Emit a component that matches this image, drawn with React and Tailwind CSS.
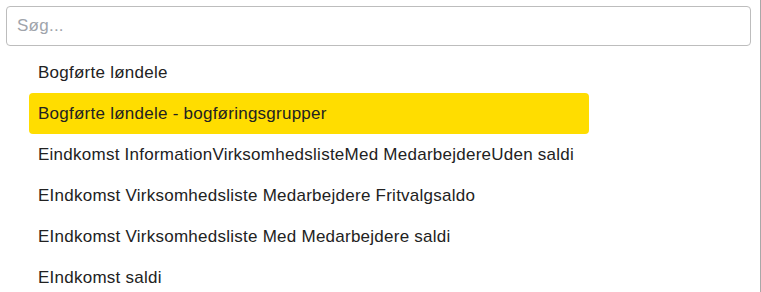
import React from "react";

const items = [
  "Bogførte løndele",
  "Bogførte løndele - bogføringsgrupper",
  "Eindkomst InformationVirksomhedslisteMed MedarbejdereUden saldi",
  "EIndkomst Virksomhedsliste Medarbejdere Fritvalgsaldo",
  "EIndkomst Virksomhedsliste Med Medarbejdere saldi",
  "EIndkomst saldi",
];

export default function App() {
  return (
    <div
      className="w-[761px] h-[292px] overflow-hidden bg-white border-r border-[#a8a8a8] flex flex-col"
      style={{ fontFamily: '"Liberation Sans", Arial, sans-serif' }}
    >
      <div className="pt-[6px] pl-[6px] pr-[9px]">
        <input
          placeholder="Søg..."
          className="w-full h-[40px] rounded-[4px] border border-[#bdbdbd] px-[10px] text-[17px] tracking-[0.25px] text-[#222] placeholder:text-[#a0a4ab] outline-none"
        />
      </div>
      <ul className="mt-[6px] pl-[29px] w-[589px] flex flex-col">
        {items.map((t, i) => (
          <li
            key={i}
            className={
              "h-[41px] flex items-center px-[9px] text-[17px] tracking-[0.25px] text-[#222] whitespace-nowrap rounded-[4px] " +
              (i === 1 ? "bg-[#ffdd00]" : "")
            }
          >
            {t}
          </li>
        ))}
      </ul>
    </div>
  );
}
